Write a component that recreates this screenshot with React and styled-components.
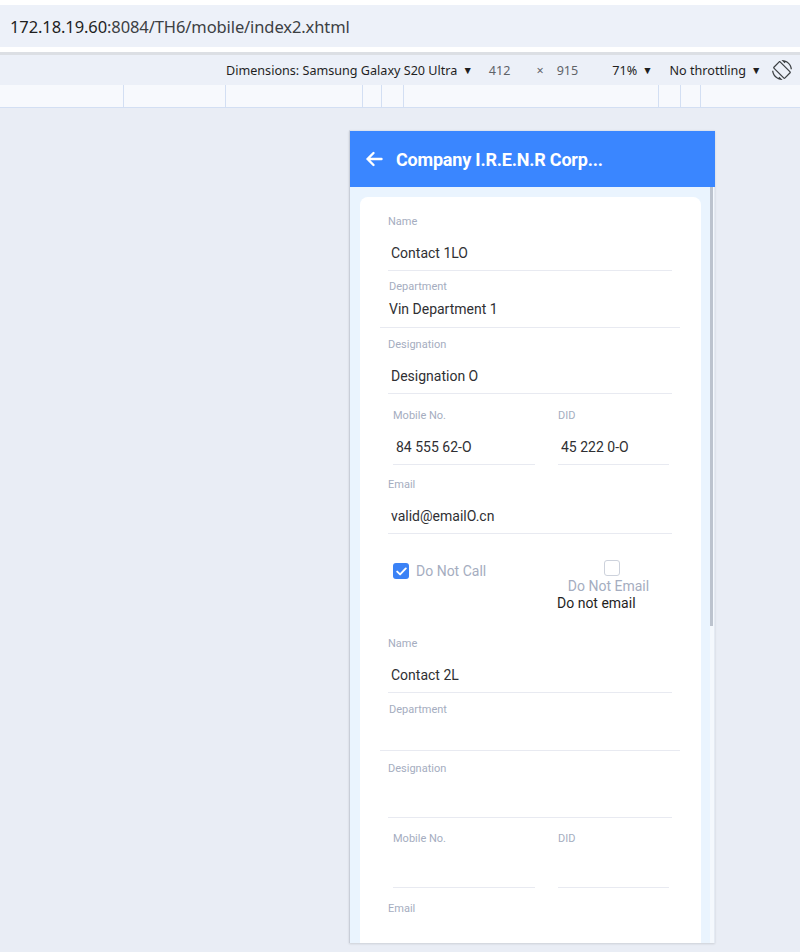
import styled, { createGlobalStyle } from "styled-components";

const GlobalStyle = createGlobalStyle`
  html, body {
    margin: 0;
    padding: 0;
    background: #e9edf5;
  }
  * {
    box-sizing: border-box;
  }
`;

const Page = styled.div`
  width: 800px;
  height: 952px;
  overflow: hidden;
  background: #e9edf5;
  font-family: "Noto Sans", "Open Sans", sans-serif;
`;

const UrlWrap = styled.div`
  background: #ffffff;
  padding-top: 5px;
  border-bottom: 3px solid #dcdfe4;
  padding-bottom: 5px;
`;

const UrlBar = styled.div`
  height: 42px;
  background: #edf1f9;
  display: flex;
  align-items: center;
  padding-left: 10px;
  font-size: 16.5px;
  color: #3c4043;
  letter-spacing: -0.1px;
  span {
    color: #1f1f1f;
  }
`;

const Toolbar = styled.div`
  height: 30px;
  background: #ecf0f8;
  display: flex;
  align-items: center;
  padding-left: 226px;
  font-size: 12.6px;
  color: #1f1f1f;
`;

const ToolText = styled.span`
  margin-left: ${(p) => p.$ml || 0}px;
  color: ${(p) => (p.$muted ? "#5f6368" : "#1f1f1f")};
  white-space: nowrap;
`;

const Caret = styled.span`
  font-size: 10.5px;
  margin-left: 5px;
  color: #1f1f1f;
`;

const RotateIcon = styled.svg`
  margin-left: 11px;
  flex: none;
`;

const Ruler = styled.div`
  height: 23px;
  display: flex;
  background: #f7f9fd;
  border-bottom: 1px solid #d3dff3;
`;

const RulerSeg = styled.div`
  flex: none;
  height: 100%;
  width: ${(p) => p.$w}px;
  border-right: ${(p) => (p.$last ? "none" : "1px solid #d3dff3")};
`;

const Stage = styled.div`
  padding: 22px 0 0 349px;
`;

const Device = styled.div`
  width: 366px;
  height: 813px;
  display: flex;
  flex-direction: column;
  overflow: hidden;
  border-left: 1px solid #c9ced8;
  border-top: 1px solid #dde3ee;
  box-shadow: 0 1px 2px rgba(0, 0, 0, 0.12);
  background: #eaf4fe;
  font-family: Roboto, "Noto Sans", sans-serif;
`;

const Header = styled.header`
  height: 56px;
  flex: none;
  background: #3a86ff;
  display: flex;
  align-items: center;
  padding-left: 15px;
  gap: 13px;
  color: #ffffff;
  font-size: 18px;
  font-weight: 700;
  letter-spacing: -0.2px;
`;

const Body = styled.div`
  flex: 1;
  display: flex;
  min-height: 0;
`;

const Scroller = styled.div`
  flex: 1;
  padding: 10px 9px 0 10px;
  overflow: hidden;
`;

const Track = styled.div`
  width: 5px;
  flex: none;
  background: #f4f8fd;
  border-right: 1px solid #e4eaf3;
`;

const Thumb = styled.div`
  width: 3px;
  height: 439px;
  background: #bcc3ce;
`;

const Card = styled.div`
  background: #ffffff;
  border-radius: 8px;
  padding-top: 18px;
  min-height: 900px;
`;

const Field = styled.div`
  margin: ${(p) => p.$top || 0}px ${(p) => p.$right ?? 29}px 0 ${(p) => p.$left ?? 28}px;
  padding-left: ${(p) => p.$pad || 0}px;
  border-bottom: 1px solid #e8eaf1;
  padding-bottom: ${(p) => (p.$plain ? 8 : 0)}px;
`;

const Label = styled.div`
  font-size: 11px;
  line-height: 14px;
  height: 14px;
  color: #a5adc0;
`;

const Value = styled.div`
  font-size: 14px;
  color: #2f2f33;
  height: ${(p) => (p.$plain ? 20 : 34)}px;
  line-height: ${(p) => (p.$plain ? 20 : 34)}px;
  margin-top: ${(p) => (p.$plain ? 5 : 7)}px;
  padding-left: ${(p) => (p.$plain ? 0 : 3)}px;
`;

const Row = styled.div`
  display: flex;
  margin-top: ${(p) => p.$top || 0}px;
  padding-left: 33px;
  gap: 23px;
`;

const RowField = styled.div`
  width: ${(p) => p.$w}px;
  flex: none;
  border-bottom: 1px solid #e8eaf1;
`;

const ChecksRow = styled.div`
  display: flex;
  margin-top: 26px;
  padding-left: 33px;
  height: 77px;
`;

const CheckItem = styled.label`
  display: flex;
  align-items: center;
  gap: 7px;
  height: 20px;
  margin-top: 1px;
  width: 164px;
  flex: none;
  font-size: 14px;
  color: #a5adc0;
`;

const CheckColumn = styled.div`
  width: 109px;
  display: flex;
  flex-direction: column;
  font-size: 14px;
  line-height: 17px;
`;

const Box = styled.span`
  width: 16px;
  height: 16px;
  flex: none;
  border-radius: 3px;
  display: flex;
  align-items: center;
  justify-content: center;
  background: ${(p) => (p.$checked ? "#3b82f6" : "#ffffff")};
  border: ${(p) => (p.$checked ? "none" : "1.5px solid #cdd2dc")};
  align-self: ${(p) => (p.$center ? "center" : "auto")};
`;

const CenterText = styled.div`
  text-align: center;
  color: #a5adc0;
  margin-top: 2px;
  padding-right: 6px;
`;

const PlainText = styled.div`
  color: #1f1f1f;
`;

function Input({ label, value, top }) {
  return (
    <Field $top={top}>
      <Label>{label}</Label>
      <Value>{value}</Value>
    </Field>
  );
}

function PlainField({ label, value, top }) {
  return (
    <Field $top={top} $left={20} $right={21} $pad={9} $plain>
      <Label>{label}</Label>
      <Value $plain>{value}</Value>
    </Field>
  );
}

function PhoneRow({ mobile, did, top }) {
  return (
    <Row $top={top}>
      <RowField $w={142}>
        <Label>Mobile No.</Label>
        <Value>{mobile}</Value>
      </RowField>
      <RowField $w={111}>
        <Label>DID</Label>
        <Value>{did}</Value>
      </RowField>
    </Row>
  );
}

const Check = () => (
  <svg width="11" height="9" viewBox="0 0 11 9">
    <path d="M1.2 4.6 L4.1 7.4 L9.8 1.4" fill="none" stroke="#fff" strokeWidth="1.9" strokeLinecap="round" strokeLinejoin="round" />
  </svg>
);

const rulerWidths = [124, 102, 137, 19, 22, 255, 22, 20, 99];

export default function App() {
  return (
    <Page>
      <GlobalStyle />
      <UrlWrap>
        <UrlBar>
          <span>172.18.19.60</span>:8084/TH6/mobile/index2.xhtml
        </UrlBar>
      </UrlWrap>
      <Toolbar>
        <ToolText>Dimensions: Samsung Galaxy S20 Ultra</ToolText>
        <Caret>▼</Caret>
        <ToolText $ml={16} $muted>412</ToolText>
        <ToolText $ml={26} $muted>×</ToolText>
        <ToolText $ml={13} $muted>915</ToolText>
        <ToolText $ml={34}>71%</ToolText>
        <Caret>▼</Caret>
        <ToolText $ml={17}>No throttling</ToolText>
        <Caret>▼</Caret>
        <RotateIcon width="20" height="20" viewBox="0 0 24 24">
          <path
            fill="#3c4043"
            d="M16.48 2.52c3.27 1.55 5.61 4.72 5.970 8.48h1.5C23.44 4.84 18.29 0 12 0l-.66.03 3.81 3.81 1.33-1.32zm-6.25-.77c-.59-.59-1.54-.59-2.12 0L1.75 8.11c-.59.59-.59 1.54 0 2.12l12.02 12.02c.59.59 1.54.59 2.12 0l6.36-6.36c.59-.59.59-1.54 0-2.12L10.23 1.75zm4.6 19.44L2.81 9.17l6.36-6.36 12.02 12.02-6.36 6.36zm-7.31.29C4.25 19.94 1.91 16.76 1.55 13H.05C.56 19.16 5.71 24 12 24l.66-.03-3.81-3.81-1.33 1.32z"
          />
        </RotateIcon>
      </Toolbar>
      <Ruler>
        {rulerWidths.map((w, i) => (
          <RulerSeg key={i} $w={w} $last={i === rulerWidths.length - 1} />
        ))}
      </Ruler>
      <Stage>
        <Device>
          <Header>
            <svg width="18" height="16" viewBox="0 0 18 16">
              <path d="M16.5 8 H2.5 M8.5 2 L2.5 8 L8.5 14" fill="none" stroke="#fff" strokeWidth="2.4" strokeLinecap="round" strokeLinejoin="round" />
            </svg>
            Company I.R.E.N.R Corp...
          </Header>
          <Body>
            <Scroller>
              <Card>
                <Input label="Name" value="Contact 1LO" />
                <PlainField label="Department" value="Vin Department 1" top={9} />
                <Input label="Designation" value="Designation O" top={10} />
                <PhoneRow mobile="84 555 62-O" did="45 222 0-O" top={15} />
                <Input label="Email" value="valid@emailO.cn" top={13} />
                <ChecksRow>
                  <CheckItem>
                    <Box $checked>
                      <Check />
                    </Box>
                    Do Not Call
                  </CheckItem>
                  <CheckColumn>
                    <Box $center />
                    <CenterText>Do Not Email</CenterText>
                    <PlainText>Do not email</PlainText>
                  </CheckColumn>
                </ChecksRow>
                <Input label="Name" value="Contact 2L" />
                <PlainField label="Department" value="" top={10} />
                <Input label="Designation" value="" top={11} />
                <PhoneRow top={14} />
                <Input label="Email" value="" top={14} />
              </Card>
            </Scroller>
            <Track>
              <Thumb />
            </Track>
          </Body>
        </Device>
      </Stage>
    </Page>
  );
}
